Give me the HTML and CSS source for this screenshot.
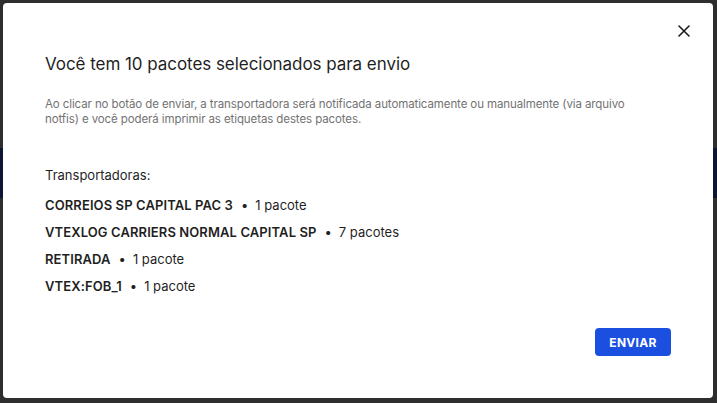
FILE: index.html
```html
<!DOCTYPE html>
<html lang="pt-BR">
<head>
<meta charset="utf-8">
<link rel="stylesheet" href="styles.css">
</head>
<body>
<div class="backdrop">
  <div class="band"></div>
  <div class="modal">
    <button class="close" aria-label="Fechar">
      <svg width="12" height="12" viewBox="0 0 12 12"><path d="M1 1L11 11M11 1L1 11" stroke="#1b1b1b" stroke-width="1.6" stroke-linecap="round"/></svg>
    </button>
    <h1 class="title">Você tem 10 pacotes selecionados para envio</h1>
    <p class="desc">Ao clicar no botão de enviar, a transportadora será notificada automaticamente ou manualmente (via arquivo notfis) e você poderá imprimir as etiquetas destes pacotes.</p>
    <div class="label">Transportadoras:</div>
    <ul class="list">
      <li><b>CORREIOS SP CAPITAL PAC 3</b><span class="dot">•</span>1 pacote</li>
      <li><b>VTEXLOG CARRIERS NORMAL CAPITAL SP</b><span class="dot">•</span>7 pacotes</li>
      <li><b>RETIRADA</b><span class="dot">•</span>1 pacote</li>
      <li><b>VTEX:FOB_1</b><span class="dot">•</span>1 pacote</li>
    </ul>
    <div class="footer">
      <button class="send">ENVIAR</button>
    </div>
  </div>
</div>
</body>
</html>
```
FILE: styles.css
```css
* { box-sizing: border-box; }
html, body { margin: 0; padding: 0; }
body {
  background: #2e2e2e;
  font-family: Inter, "Noto Sans", sans-serif;
  width: 717px;
  height: 403px;
  overflow: hidden;
}
.backdrop {
  position: relative;
  width: 717px;
  height: 403px;
  padding: 3px 4px 5px 3px;
}
.band {
  position: absolute;
  left: 0; right: 0;
  top: 148px; height: 50px;
  background: #0c1633;
}
.modal {
  position: relative;
  background: #fff;
  border-radius: 4px;
  height: 395px;
  padding: 49px 42px 0 42px;
  display: flex;
  flex-direction: column;
}
.close {
  position: absolute;
  top: 22px; right: 23px;
  border: 0; background: none; padding: 0;
  width: 12px; height: 12px;
  display: flex;
}
.title {
  margin: 0;
  font-size: 17px;
  font-weight: 400;
  color: #1f1f1f;
  line-height: 24px;
  letter-spacing: -0.05px;
}
.desc {
  margin: 21px 0 0 0;
  font-size: 11.5px;
  line-height: 15px;
  color: #727273;
  max-width: 600px;
  letter-spacing: -0.1px;
}
.label {
  margin-top: 39px;
  font-size: 13px;
  line-height: 18px;
  color: #1f1f1f;
}
.list {
  list-style: none;
  margin: 12px 0 0 0;
  padding: 0;
  display: flex;
  flex-direction: column;
  gap: 9px;
}
.list li {
  font-size: 13px;
  line-height: 18px;
  color: #1f1f1f;
}
.list b { font-weight: 600; letter-spacing: 0.1px; }
.dot { margin: 0 7px 0 8px; }
.footer {
  margin-top: auto;
  margin-bottom: 42px;
  display: flex;
  justify-content: flex-end;
}
.send {
  background: #1a4fe0;
  color: #fff;
  border: 0;
  border-radius: 4px;
  font-family: inherit;
  font-size: 12px;
  font-weight: 700;
  letter-spacing: 0.3px;
  width: 76px;
  height: 28px;
}
```
